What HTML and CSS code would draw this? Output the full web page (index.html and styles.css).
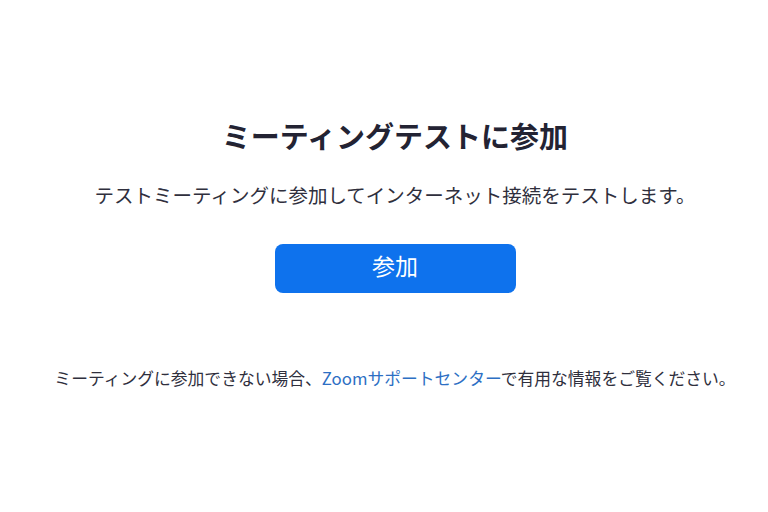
FILE: index.html
```html
<!DOCTYPE html>
<html lang="ja">
<head>
<meta charset="utf-8">
<link rel="stylesheet" href="styles.css">
</head>
<body>
<main class="page">
  <h1 class="title">ミーティングテストに参加</h1>
  <p class="lead">テストミーティングに参加してインターネット接続をテストします。</p>
  <button class="join">参加</button>
  <p class="help">ミーティングに参加できない場合、<a class="link" href="#">Zoomサポートセンター</a>で有用な情報をご覧ください。</p>
</main>
</body>
</html>
```
FILE: styles.css
```css
html, body {
  margin: 0;
  padding: 0;
  background: #ffffff;
}
body {
  font-family: "Noto Sans CJK JP", "Noto Sans", sans-serif;
  color: #232333;
}
.page {
  width: 768px;
  height: 512px;
  display: flex;
  flex-direction: column;
  align-items: center;
  box-sizing: border-box;
  padding-top: 115px;
  padding-left: 22px;
}
.title {
  margin: 0;
  font-size: 29px;
  line-height: 40px;
  font-weight: 700;
  color: #232333;
}
.lead {
  margin: 26px 0 0;
  font-size: 19.5px;
  line-height: 28px;
  color: #2f2f3d;
}
.join {
  margin-top: 35px;
  width: 241px;
  height: 49px;
  border: none;
  border-radius: 8px;
  background: #0e72ed;
  color: #ffffff;
  font-family: inherit;
  font-size: 23px;
  padding: 0 0 8px;
}
.help {
  margin: 73px 0 0;
  font-size: 16.8px;
  line-height: 24px;
  color: #2f2f3d;
}
.link {
  color: #2d6fc4;
  text-decoration: none;
}
```
